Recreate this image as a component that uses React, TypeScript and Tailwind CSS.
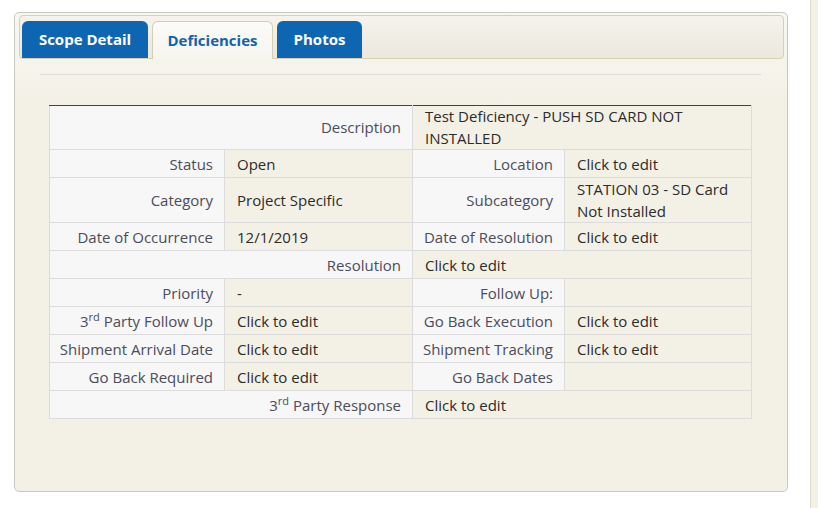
import React from 'react';

type Cell = { text: React.ReactNode; kind: 'label' | 'value'; span?: number };

const sup = (rest: string) => (
    <>
        3<sup className="text-[11px]">rd</sup> {rest}
    </>
);

const rows: Cell[][] = [
    [
        { text: 'Description', kind: 'label', span: 2 },
        { text: 'Test Deficiency - PUSH SD CARD NOT INSTALLED', kind: 'value', span: 2 },
    ],
    [
        { text: 'Status', kind: 'label' },
        { text: 'Open', kind: 'value' },
        { text: 'Location', kind: 'label' },
        { text: 'Click to edit', kind: 'value' },
    ],
    [
        { text: 'Category', kind: 'label' },
        { text: 'Project Specific', kind: 'value' },
        { text: 'Subcategory', kind: 'label' },
        { text: 'STATION 03 - SD Card Not Installed', kind: 'value' },
    ],
    [
        { text: 'Date of Occurrence', kind: 'label' },
        { text: '12/1/2019', kind: 'value' },
        { text: 'Date of Resolution', kind: 'label' },
        { text: 'Click to edit', kind: 'value' },
    ],
    [
        { text: 'Resolution', kind: 'label', span: 2 },
        { text: 'Click to edit', kind: 'value', span: 2 },
    ],
    [
        { text: 'Priority', kind: 'label' },
        { text: '-', kind: 'value' },
        { text: 'Follow Up:', kind: 'label' },
        { text: '', kind: 'value' },
    ],
    [
        { text: sup('Party Follow Up'), kind: 'label' },
        { text: 'Click to edit', kind: 'value' },
        { text: 'Go Back Execution', kind: 'label' },
        { text: 'Click to edit', kind: 'value' },
    ],
    [
        { text: 'Shipment Arrival Date', kind: 'label' },
        { text: 'Click to edit', kind: 'value' },
        { text: 'Shipment Tracking', kind: 'label' },
        { text: 'Click to edit', kind: 'value' },
    ],
    [
        { text: 'Go Back Required', kind: 'label' },
        { text: 'Click to edit', kind: 'value' },
        { text: 'Go Back Dates', kind: 'label' },
        { text: '', kind: 'value' },
    ],
    [
        { text: sup('Party Response'), kind: 'label', span: 2 },
        { text: 'Click to edit', kind: 'value', span: 2 },
    ],
];

export default function App() {
    return (
        <div
            className="flex w-[818px] h-[508px] bg-white overflow-hidden"
            style={{ fontFamily: '"Open Sans", "Noto Sans", sans-serif' }}
        >
            {/* Main panel */}
            <div className="ml-[14px] mt-[12px] w-[774px] h-[480px] border border-[#c9c9c4] rounded-[5px] bg-gradient-to-b from-[#f8f7f0] to-[#f3f1e6] to-[20%] flex flex-col">
                {/* Tab bar */}
                <div className="ml-[4px] mr-[3px] mt-[2px] h-[44px] border border-[#d8cfb6] rounded-[4px] bg-gradient-to-b from-[#f5f3ec] to-[#ebe8dc] flex items-end gap-[4px] pl-[2px]">
                    <div className="w-[126px] h-[37px] rounded-t-[6px] bg-[#0e66b2] text-white font-bold text-[15px] flex items-center justify-center">
                        Scope Detail
                    </div>
                    <div className="w-[121px] h-[38px] -mb-[1px] rounded-t-[6px] border border-b-0 border-[#d6cdb2] bg-gradient-to-b from-[#fbfbf8] to-[#f6f5ee] text-[#1463aa] font-bold text-[15px] flex items-center justify-center">
                        Deficiencies
                    </div>
                    <div className="w-[85px] h-[37px] rounded-t-[6px] bg-[#0e66b2] text-white font-bold text-[15px] flex items-center justify-center">
                        Photos
                    </div>
                </div>

                <div className="ml-[25px] w-[721px] mt-[15px] border-t border-[#dcdcdc]" />

                {/* Detail table */}
                <table className="ml-[34px] mt-[30px] w-[702px] border-collapse text-[15px] leading-[22px] table-fixed">
                    <colgroup>
                        <col className="w-[175px]" />
                        <col className="w-[188px]" />
                        <col className="w-[152px]" />
                        <col className="w-[187px]" />
                    </colgroup>
                    <tbody>
                        {rows.map((row, i) => (
                            <tr key={i}>
                                {row.map((cell, j) => (
                                    <td
                                        key={j}
                                        colSpan={cell.span}
                                        className={`h-[28px] py-0 border border-[#dcdcdc] align-middle ${
                                            i === 0 ? 'border-t-[#dd0000] leading-[21.5px]' : ''
                                        } ${
                                            cell.kind === 'label'
                                                ? 'bg-[#f7f7f7] text-right pr-[11px] text-[#4c4c5a]'
                                                : 'bg-[#f3f1e6] pl-[12px] text-[#2b2b2b]'
                                        }`}
                                    >
                                        {cell.text}
                                    </td>
                                ))}
                            </tr>
                        ))}
                    </tbody>
                </table>
            </div>

            {/* Right edge strip */}
            <div className="ml-[22px] w-[8px] h-full border-l border-[#dedbcc] bg-[#f3f1e6]" />
        </div>
    );
}
